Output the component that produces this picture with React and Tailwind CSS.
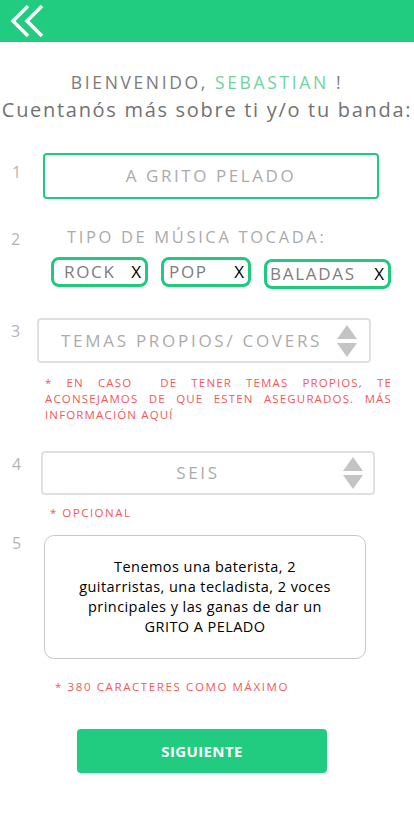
const font = { fontFamily: '"Open Sans", "Noto Sans", sans-serif' };

function Arrows() {
  return (
    <svg width="20" height="32" viewBox="0 0 20 32" className="shrink-0">
      <polygon points="10,0 20,14 0,14" fill="#c4c4c4" />
      <polygon points="0,18 20,18 10,32" fill="#c4c4c4" />
    </svg>
  );
}

function Chip({ label, className }) {
  return (
    <div className={"flex items-center justify-between border-[3px] border-[#21c97f] rounded-lg h-[30px] pr-1 " + className}>
      <span className="text-[17px] text-[#7d7d7d] tracking-[0.1em]">{label}</span>
      <span className="text-[17px] text-black">X</span>
    </div>
  );
}

export default function App() {
  return (
    <div className="min-h-screen bg-white" style={font}>
      {/* Header */}
      <div className="h-[42px] bg-[#21cc81] flex items-center">
        <svg width="48" height="42" viewBox="0 0 48 42">
          <path d="M28 6 L13 21 L28 36" stroke="white" strokeWidth="3.5" fill="none" />
          <path d="M42 6 L27 21 L42 36" stroke="white" strokeWidth="3.5" fill="none" />
        </svg>
      </div>

      {/* Welcome */}
      <div className="text-center pt-[28px]">
        <p className="text-[17.5px] text-[#7a7a7a] tracking-[0.15em] leading-6">
          BIENVENIDO, <span className="text-[#6fd3a0]">SEBASTIAN</span> !
        </p>
        <p className="text-[20px] text-[#727272] tracking-[0.085em] leading-7 mt-[2px] whitespace-nowrap">
          Cuentanós más sobre ti y/o tu banda:
        </p>
      </div>

      {/* 1 */}
      <div className="flex mt-[29px]">
        <span className="w-[43px] pl-[12px] pt-[7px] text-[16px] text-[#b5b5b5]">1</span>
        <div className="w-[336px] h-[46px] border-2 border-[#21c97f] rounded flex items-center justify-center">
          <span className="text-[17px] text-[#ababab] tracking-[0.15em]">A GRITO PELADO</span>
        </div>
      </div>

      {/* 2 */}
      <div className="flex mt-[28px]">
        <span className="w-[67px] pl-[11px] text-[16px] text-[#b5b5b5]">2</span>
        <span className="text-[16.5px] text-[#ababab] tracking-[0.16em] leading-5 whitespace-nowrap">TIPO DE MÚSICA TOCADA:</span>
      </div>
      <div className="flex items-start mt-[6px] pl-[51px]">
        <Chip label="ROCK" className="w-[97px] pl-[10px]" />
        <Chip label="POP" className="w-[90px] ml-[13px] pl-[5px]" />
        <Chip label="BALADAS" className="w-[127px] ml-[13px] mt-[2px] pl-[3px]" />
      </div>

      {/* 3 */}
      <div className="flex mt-[29px]">
        <span className="w-[37px] pl-[11px] pt-[1px] text-[16px] text-[#b5b5b5]">3</span>
        <div className="w-[334px] h-[45px] border-2 border-[#e0e0e0] rounded flex items-center pl-[22px] pr-[12px] justify-between">
          <span className="text-[17px] text-[#ababab] tracking-[0.16em] whitespace-nowrap">TEMAS PROPIOS/ COVERS</span>
          <Arrows />
        </div>
      </div>
      <div className="ml-[45px] mr-[22px] mt-[12px] text-[11.5px] leading-4 text-[#f05a5a] tracking-[0.1em]">
        <p className="text-justify [text-align-last:justify]">* EN CASO &nbsp;DE TENER TEMAS PROPIOS, TE</p>
        <p className="text-justify [text-align-last:justify]">ACONSEJAMOS DE QUE ESTEN ASEGURADOS. MÁS</p>
        <p>INFORMACIÓN AQUÍ</p>
      </div>

      {/* 4 */}
      <div className="flex mt-[28px]">
        <span className="w-[41px] pl-[12px] pt-[1px] text-[16px] text-[#b5b5b5]">4</span>
        <div className="w-[334px] h-[44px] border-2 border-[#e0e0e0] rounded flex items-center pr-[10px]">
          <span className="flex-1 text-center pl-[10px] text-[17px] text-[#ababab] tracking-[0.16em]">SEIS</span>
          <Arrows />
        </div>
      </div>
      <p className="ml-[50px] mt-[10px] text-[11.5px] leading-4 text-[#f05a5a] tracking-[0.13em]">* OPCIONAL</p>

      {/* 5 */}
      <div className="flex mt-[14px]">
        <span className="w-[44px] pl-[12px] text-[16px] text-[#b5b5b5] leading-4">5</span>
        <div className="w-[322px] h-[124px] border border-[#c8c8c8] rounded-[10px] flex items-center justify-center">
          <p className="text-[14.5px] text-black text-center leading-5 tracking-[0.03em]">
            Tenemos una baterista, 2<br />
            guitarristas, una tecladista, 2 voces<br />
            principales y las ganas de dar un<br />
            GRITO A PELADO
          </p>
        </div>
      </div>
      <p className="ml-[55px] mt-[20px] text-[11.5px] leading-4 text-[#f05a5a] tracking-[0.14em]">* 380 CARACTERES COMO MÁXIMO</p>

      {/* Button */}
      <div className="pl-[77px] mt-[34px] pb-[60px]">
        <button className="w-[250px] h-[44px] bg-[#21cc81] rounded text-white text-[15px] font-bold tracking-wide">
          SIGUIENTE
        </button>
      </div>
    </div>
  );
}
